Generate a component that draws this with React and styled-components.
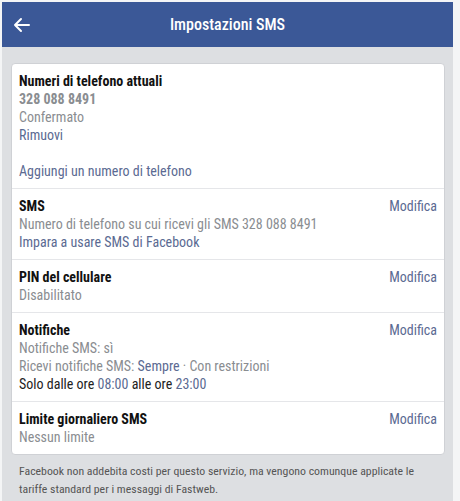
import React from 'react';
import styled, { createGlobalStyle } from 'styled-components';

const GlobalStyle = createGlobalStyle`
  body {
    margin: 0;
    background: #f4f5f6;
    font-family: "Roboto Condensed", "Liberation Sans Narrow", "Roboto", sans-serif;
  }
`;

const Screen = styled.div`
  margin: 2px 7px 0 2px;
  background: #dddfe2;
  min-height: 499px;
`;

const Header = styled.div`
  height: 45px;
  background: #3b5897;
  color: #fff;
  display: flex;
  align-items: center;
  position: relative;
`;

const Back = styled.button`
  border: 0;
  background: none;
  padding: 0 0 0 11px;
  color: #fff;
  display: flex;
  align-items: center;
  cursor: pointer;
`;

const Title = styled.h1`
  position: absolute;
  left: 0;
  right: 0;
  text-align: center;
  margin: 0;
  font-size: 16px;
  font-weight: 500;
  pointer-events: none;
`;

const Body = styled.div`
  padding: 16px 8px 0 9px;
`;

const Card = styled.div`
  background: #fff;
  border: 1px solid #cfd1d5;
  border-radius: 4px;
`;

const Section = styled.div`
  display: flex;
  justify-content: space-between;
  align-items: flex-start;
  padding: 8px 7px 8px 7px;
  border-top: ${(p) => (p.first ? 'none' : '1px solid #e5e6e9')};
  font-size: 14px;
  line-height: 18px;
`;

const Lines = styled.div`
  display: flex;
  flex-direction: column;
`;

const Heading = styled.div`
  font-weight: 700;
  color: #111;
`;

const Line = styled.div`
  color: ${(p) => (p.dark ? '#222' : '#8a8d91')};
  font-weight: ${(p) => (p.bold ? 700 : 400)};
  margin-top: ${(p) => (p.gap ? '18px' : '0')};
`;

const Link = styled.a`
  color: #5b6a92;
  text-decoration: none;
  cursor: pointer;
`;

const Edit = styled(Link)`
  font-size: 14px;
  line-height: 18px;
`;

const Note = styled.p`
  margin: 0;
  padding: 7px 6px 0 8px;
  font-size: 11.8px;
  line-height: 18px;
  color: #555;
`;

const Arrow = () => (
  <svg width="18" height="16" viewBox="0 0 18 16" fill="none" stroke="#fff" strokeWidth="2" strokeLinecap="round" strokeLinejoin="round">
    <path d="M16 8H2M8 2L2 8l6 6" />
  </svg>
);

export default function App() {
  return (
    <>
      <GlobalStyle />
      <Screen>
        <Header>
          <Back aria-label="Indietro">
            <Arrow />
          </Back>
          <Title>Impostazioni SMS</Title>
        </Header>
        <Body>
          <Card>
            <Section first>
              <Lines>
                <Heading>Numeri di telefono attuali</Heading>
                <Line bold>328 088 8491</Line>
                <Line>Confermato</Line>
                <Link>Rimuovi</Link>
                <Line gap>
                  <Link>Aggiungi un numero di telefono</Link>
                </Line>
              </Lines>
            </Section>
            <Section>
              <Lines>
                <Heading>SMS</Heading>
                <Line>Numero di telefono su cui ricevi gli SMS 328 088 8491</Line>
                <Link>Impara a usare SMS di Facebook</Link>
              </Lines>
              <Edit>Modifica</Edit>
            </Section>
            <Section>
              <Lines>
                <Heading>PIN del cellulare</Heading>
                <Line>Disabilitato</Line>
              </Lines>
              <Edit>Modifica</Edit>
            </Section>
            <Section>
              <Lines>
                <Heading>Notifiche</Heading>
                <Line>Notifiche SMS: sì</Line>
                <Line>
                  Ricevi notifiche SMS: <Link>Sempre</Link> · Con restrizioni
                </Line>
                <Line dark>
                  Solo dalle ore <Link>08:00</Link> alle ore <Link>23:00</Link>
                </Line>
              </Lines>
              <Edit>Modifica</Edit>
            </Section>
            <Section>
              <Lines>
                <Heading>Limite giornaliero SMS</Heading>
                <Line>Nessun limite</Line>
              </Lines>
              <Edit>Modifica</Edit>
            </Section>
          </Card>
          <Note>
            Facebook non addebita costi per questo servizio, ma vengono comunque applicate le
            tariffe standard per i messaggi di Fastweb.
          </Note>
        </Body>
      </Screen>
    </>
  );
}
